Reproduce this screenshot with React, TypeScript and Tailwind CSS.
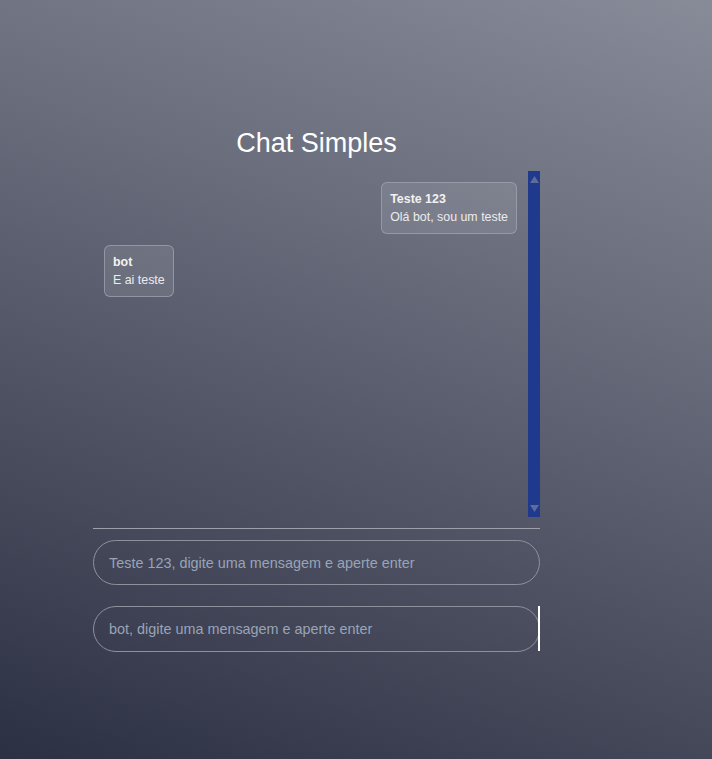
const messages = [
  { user: "Teste 123", text: "Olá bot, sou um teste", mine: true },
  { user: "bot", text: "E ai teste", mine: false },
];

function ScrollTrack() {
  return (
    <div className="flex w-[12px] shrink-0 flex-col items-center justify-between bg-[#1f3a8c] py-[5px]">
      <svg width="9" height="7" viewBox="0 0 9 7">
        <path d="M4.5 0 L9 7 L0 7 Z" fill="#5d6c9c" />
      </svg>
      <svg width="9" height="7" viewBox="0 0 9 7">
        <path d="M0 0 L9 0 L4.5 7 Z" fill="#5d6c9c" />
      </svg>
    </div>
  );
}

export default function App() {
  return (
    <div
      className="min-h-screen w-full bg-[linear-gradient(20deg,#2c3043,#888c99)] text-white"
      style={{ fontFamily: '"Liberation Sans", Arial, sans-serif' }}
    >
      <div className="ml-[93px] w-[447px] pt-[127px] pb-[100px]">
        <h1 className="mb-[12px] text-center text-[27px] leading-[32px] text-white">Chat Simples</h1>

        <div className="flex h-[346px]">
          <div className="flex flex-1 flex-col gap-[11px] px-[11px] pt-[11px]">
            {messages.map((m, i) => (
              <div
                key={i}
                className={
                  "rounded-[6px] border border-[#a3a7b3]/70 bg-white/10 px-2 py-[7px] text-[12.4px] leading-[18px] " +
                  (m.mine ? "self-end" : "self-start")
                }
              >
                <div className="font-bold text-[#f2f2f2]">{m.user}</div>
                <div className="text-[#ececec]">{m.text}</div>
              </div>
            ))}
          </div>
          <ScrollTrack />
        </div>

        <div className="mt-[11px] h-px w-full bg-[#9da0aa]" />

        <div className="mt-[11px] flex flex-col gap-[21px]">
          <input
            placeholder="Teste 123, digite uma mensagem e aperte enter"
            className="h-[45px] w-full rounded-full border border-[#8d919d] bg-transparent px-[15px] text-[14.4px] text-white outline-none placeholder:text-[#9aa4b6]"
          />
          <div className="relative">
            <input
              placeholder="bot, digite uma mensagem e aperte enter"
              className="h-[46px] w-full rounded-full border border-[#8d919d] bg-transparent px-[15px] text-[14.4px] text-white outline-none placeholder:text-[#9aa4b6]"
            />
            <span className="absolute right-0 top-0 h-[45px] w-[2px] bg-white" />
          </div>
        </div>
      </div>
    </div>
  );
}
